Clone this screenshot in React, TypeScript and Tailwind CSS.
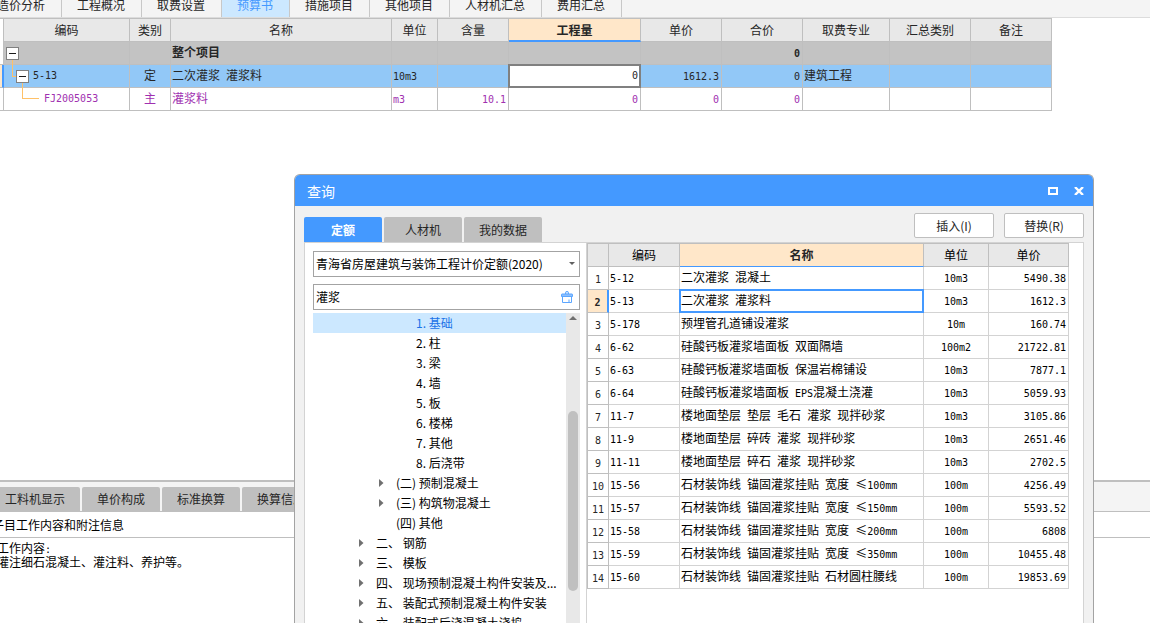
import { Fragment, useState, type ReactNode } from "react";

type Align = "left" | "center" | "right";

const pageTabs = ["造价分析", "工程概况", "取费设置", "预算书", "措施项目", "其他项目", "人材机汇总", "费用汇总"];

const detailTabs = ["工料机显示", "单价构成", "标准换算", "换算信息"];

const dialogTabs = ["定额", "人材机", "我的数据"];

const budgetColumns = [
  { title: "编码", width: "w-[126px]" },
  { title: "类别", width: "w-[41px]" },
  { title: "名称", width: "w-[221px]" },
  { title: "单位", width: "w-[46px]" },
  { title: "含量", width: "w-[71px]" },
  { title: "工程量", width: "w-[132px]" },
  { title: "单价", width: "w-[81px]" },
  { title: "合价", width: "w-[81px]" },
  { title: "取费专业", width: "w-[87px]" },
  { title: "汇总类别", width: "w-[81px]" },
  { title: "备注", width: "w-[81px]" },
];

const treeItems = [
  { level: 3, label: "1. 基础" },
  { level: 3, label: "2. 柱" },
  { level: 3, label: "3. 梁" },
  { level: 3, label: "4. 墙" },
  { level: 3, label: "5. 板" },
  { level: 3, label: "6. 楼梯" },
  { level: 3, label: "7. 其他" },
  { level: 3, label: "8. 后浇带" },
  { level: 2, label: "(二) 预制混凝土", folder: true },
  { level: 2, label: "(三) 构筑物混凝土", folder: true },
  { level: 2, label: "(四) 其他" },
  { level: 1, label: "二、 钢筋", folder: true },
  { level: 1, label: "三、 模板", folder: true },
  { level: 1, label: "四、 现场预制混凝土构件安装及...", folder: true },
  { level: 1, label: "五、 装配式预制混凝土构件安装", folder: true },
  { level: 1, label: "六、 装配式后浇混凝土浇捣", folder: true },
];

const quotas = [
  { code: "5-12", name: "二次灌浆 混凝土", unit: "10m3", price: "5490.38" },
  { code: "5-13", name: "二次灌浆 灌浆料", unit: "10m3", price: "1612.3" },
  { code: "5-178", name: "预埋管孔道铺设灌浆", unit: "10m", price: "160.74" },
  { code: "6-62", name: "硅酸钙板灌浆墙面板 双面隔墙", unit: "100m2", price: "21722.81" },
  { code: "6-63", name: "硅酸钙板灌浆墙面板 保温岩棉铺设", unit: "10m3", price: "7877.1" },
  { code: "6-64", name: "硅酸钙板灌浆墙面板 EPS混凝土浇灌", unit: "10m3", price: "5059.93" },
  { code: "11-7", name: "楼地面垫层 垫层 毛石 灌浆 现拌砂浆", unit: "10m3", price: "3105.86" },
  { code: "11-9", name: "楼地面垫层 碎砖 灌浆 现拌砂浆", unit: "10m3", price: "2651.46" },
  { code: "11-11", name: "楼地面垫层 碎石 灌浆 现拌砂浆", unit: "10m3", price: "2702.5" },
  { code: "15-56", name: "石材装饰线 锚固灌浆挂贴 宽度 ≤100mm", unit: "100m", price: "4256.49" },
  { code: "15-57", name: "石材装饰线 锚固灌浆挂贴 宽度 ≤150mm", unit: "100m", price: "5593.52" },
  { code: "15-58", name: "石材装饰线 锚固灌浆挂贴 宽度 ≤200mm", unit: "100m", price: "6808" },
  { code: "15-59", name: "石材装饰线 锚固灌浆挂贴 宽度 ≤350mm", unit: "100m", price: "10455.48" },
  { code: "15-60", name: "石材装饰线 锚固灌浆挂贴 石材圆柱腰线", unit: "100m", price: "19853.69" },
];

const indent: Record<number, string> = { 1: "pl-[46px]", 2: "pl-[66px]", 3: "pl-[86px]" };

const aligns: Record<Align, string> = {
  left: "text-left pl-px",
  center: "text-center",
  right: "text-right pr-[2px]",
};

// Latin runs take the half-width mono face, two letters per Chinese character
function Mixed({ text }: { text: string }) {
  return (
    <>
      {text.split(/([\x20-\x7e]+)/).map((part, i) =>
        i % 2 === 1 ? (
          <span key={i} className="font-['DejaVu_Sans_Mono',monospace] text-[10px] leading-none whitespace-pre">{part}</span>
        ) : (
          <Fragment key={i}>{part}</Fragment>
        )
      )}
    </>
  );
}

function Cell({ children, align = "left", className = "" }: { children?: ReactNode; align?: Align; className?: string }) {
  return (
    <td className={`h-[23px] border-r border-b border-[#bfbfbf] p-0 align-top leading-5 whitespace-nowrap ${aligns[align]} ${className}`}>
      {typeof children === "string" ? <Mixed text={children} /> : children}
    </td>
  );
}

function Collapse({ name }: { name: string }) {
  return (
    <button aria-label={name} className="block h-[13px] w-[13px] shrink-0">
      <svg viewBox="0 0 13 13" className="block h-[13px] w-[13px] overflow-visible" shapeRendering="crispEdges">
        <rect x="0.5" y="0.5" width="12" height="12" fill="#fff" stroke="#808080" />
        <path d="M3 6.5h7" stroke="#1a1a1a" />
      </svg>
    </button>
  );
}

function BudgetTable() {
  const [quantity, setQuantity] = useState("0");

  return (
    <table className="w-[1052px] table-fixed border-separate border-spacing-0 border-t border-[#bfbfbf] text-xs text-[#262626]">
      <colgroup>
        <col className="w-1" />
        {budgetColumns.map((c) => (
          <col key={c.title} className={c.width} />
        ))}
      </colgroup>
      <thead>
        <tr>
          <td className="border-r border-[#bfbfbf] p-0" />
          {budgetColumns.map((c) =>
            c.title === "工程量" ? (
              <th key={c.title} className="h-[23px] border-r border-b-2 border-r-[#bfbfbf] border-b-[#4499ff] bg-[#ffe7c9] p-0 leading-5 font-bold">{c.title}</th>
            ) : (
              <th key={c.title} className="h-[23px] border-r border-b border-[#bfbfbf] bg-[#e8e8e8] p-0 leading-5 font-normal">{c.title}</th>
            )
          )}
        </tr>
      </thead>
      <tbody>
        <tr className="bg-[#c3c3c3] font-bold">
          <td className="border-r border-b border-[#bfbfbf] bg-white p-0" />
          <Cell>
            <div className="flex h-[22px] items-center pl-px">
              <Collapse name="整个项目" />
            </div>
          </Cell>
          <Cell />
          <Cell>整个项目</Cell>
          <Cell />
          <Cell />
          <Cell />
          <Cell />
          <Cell align="right">0</Cell>
          <Cell />
          <Cell />
          <Cell />
        </tr>
        <tr className="bg-[#92c8f7]">
          <td className="border-r-2 border-b border-r-[#4499ff] border-b-[#bfbfbf] bg-[#ffe7c9] p-0" />
          <Cell>
            <div className="flex h-[22px] items-center gap-1 pl-px">
              <div className="flex items-center">
                <svg width="10" height="22" className="overflow-visible" shapeRendering="crispEdges">
                  <path d="M6.5 -5V11.5H10" fill="none" stroke="#ffc168" />
                </svg>
                <Collapse name="5-13" />
              </div>
              <Mixed text="5-13" />
            </div>
          </Cell>
          <Cell align="center">定</Cell>
          <Cell>二次灌浆 灌浆料</Cell>
          <Cell>10m3</Cell>
          <Cell />
          <Cell className="relative">
            <input
              aria-label="工程量"
              value={quantity}
              onChange={(e) => setQuantity(e.target.value)}
              className="absolute -top-px -left-px h-[24px] w-[calc(100%+2px)] border-2 border-[#808080] bg-white pr-px pb-0.5 text-right font-['DejaVu_Sans_Mono',monospace] text-[10px] outline-none"
            />
          </Cell>
          <Cell align="right">1612.3</Cell>
          <Cell align="right">0</Cell>
          <Cell>建筑工程</Cell>
          <Cell />
          <Cell />
        </tr>
        <tr className="bg-white text-[#a030b0]">
          <td className="border-r border-b border-[#bfbfbf] p-0" />
          <Cell>
            <div className="flex h-[22px] items-center gap-1 pl-px">
              <svg width="34" height="22" className="overflow-visible" shapeRendering="crispEdges">
                <path d="M16.5 -5V10.5H33" fill="none" stroke="#ffc168" />
              </svg>
              <Mixed text="FJ2005053" />
            </div>
          </Cell>
          <Cell align="center">主</Cell>
          <Cell>灌浆料</Cell>
          <Cell>m3</Cell>
          <Cell align="right">10.1</Cell>
          <Cell align="right">0</Cell>
          <Cell align="right">0</Cell>
          <Cell align="right">0</Cell>
          <Cell />
          <Cell />
          <Cell />
        </tr>
      </tbody>
    </table>
  );
}

function QuotaTree() {
  const [selected, setSelected] = useState("1. 基础");

  return (
    <div className="mt-[3px] flex min-h-0 flex-1">
      <ul className="min-w-0 flex-1 overflow-hidden">
        {treeItems.map((item) => (
          <li key={item.label}>
            <button
              onClick={() => setSelected(item.label)}
              className={`flex h-5 w-full items-center text-left ${indent[item.level]} ${selected === item.label ? "bg-[#cce8ff] text-[#1a73e8]" : "text-black"}`}
            >
              <span className="w-[17px] shrink-0">
                {item.folder && (
                  <svg width="5" height="8" viewBox="0 0 5 8">
                    <path d="M0 0L4.5 4L0 8z" fill="#707070" />
                  </svg>
                )}
              </span>
              <span className="whitespace-nowrap">{item.label}</span>
            </button>
          </li>
        ))}
      </ul>
      <div className="flex w-[14px] flex-col items-center bg-[#e8e8e8]">
        <svg width="8" height="4" viewBox="0 0 8 4" className="mt-[3px]">
          <path d="M0 4L4 0L8 4z" fill="#707070" />
        </svg>
        <div className="mt-[91px] h-[180px] w-[10px] rounded-full bg-[#c0c0c0]" />
      </div>
    </div>
  );
}

function QuotaTable() {
  const [selected, setSelected] = useState(1);

  return (
    <table className="w-[482px] table-fixed border-separate self-start border-spacing-0 border-t border-l border-[#bfbfbf] text-xs text-black">
      <colgroup>
        <col className="w-[21px]" />
        <col className="w-[71px]" />
        <col className="w-[244px]" />
        <col className="w-[65px]" />
        <col className="w-[80px]" />
      </colgroup>
      <thead>
        <tr className="bg-[#e8e8e8]">
          <td className="border-r border-b border-[#bfbfbf] p-0" />
          <th className="h-[23px] border-r border-b border-[#bfbfbf] p-0 leading-5 font-normal">编码</th>
          <th className="h-[23px] border-r border-b border-r-[#bfbfbf] border-b-[#4499ff] bg-[#ffe7c9] p-0 leading-5 font-bold text-[#262626]">名称</th>
          <th className="h-[23px] border-r border-b border-[#bfbfbf] p-0 leading-5 font-normal">单位</th>
          <th className="h-[23px] border-r border-b border-[#bfbfbf] p-0 leading-5 font-normal">单价</th>
        </tr>
      </thead>
      <tbody>
        {quotas.map((q, i) => (
          <tr key={q.code} onClick={() => setSelected(i)}>
            <th
              className={`h-[23px] border-b border-b-[#bfbfbf] p-0 text-center leading-5 text-[#262626] ${
                i === selected ? "border-r-2 border-r-[#4499ff] bg-[#ffe7c9] font-bold" : "border-r border-r-[#bfbfbf] font-normal"
              }`}
            >
              <Mixed text={String(i + 1)} />
            </th>
            <Cell className="border-[#d3d3d3]!">{q.code}</Cell>
            <Cell className="relative border-[#d3d3d3]!">
              <Mixed text={q.name} />
              {i === selected && <span className="pointer-events-none absolute -inset-px border-2 border-[#4499ff]" />}
            </Cell>
            <Cell align="center" className="border-[#d3d3d3]!">{q.unit}</Cell>
            <Cell align="right" className="border-[#d3d3d3]!">{q.price}</Cell>
          </tr>
        ))}
      </tbody>
    </table>
  );
}

function QueryDialog() {
  const [tab, setTab] = useState("定额");
  const [keyword, setKeyword] = useState("灌浆");

  return (
    <section
      role="dialog"
      aria-label="查询"
      className="absolute top-[174px] right-14 bottom-0 left-[294px] flex flex-col overflow-hidden rounded-t-md border border-b-0 border-[#a3a3a3] bg-[#f1f1f1]"
    >
      <header className="flex h-[31px] shrink-0 items-center justify-between bg-[#4499ff] pr-[9px] pl-3 text-white">
        <h2 className="text-sm leading-5">查询</h2>
        <div className="flex items-center gap-4">
          <button aria-label="最大化" className="block h-2 w-[10px] border-2 border-white" />
          <button aria-label="关闭" className="block">
            <svg width="10" height="8" viewBox="0 0 10 8" className="block">
              <path d="M1 0L9 8M9 0L1 8" stroke="#fff" strokeWidth="2.4" />
            </svg>
          </button>
        </div>
      </header>

      <div className="flex h-9 shrink-0 items-end justify-between px-[9px]">
        <div className="flex gap-0.5">
          {dialogTabs.map((t) => (
            <button
              key={t}
              onClick={() => setTab(t)}
              className={`h-[25px] w-[78px] rounded-t-xs ${t === tab ? "bg-[#4499ff] font-bold text-white" : "bg-[#bfbfbf] text-[#262626]"}`}
            >
              {t}
            </button>
          ))}
        </div>
        <div className="flex gap-[10px] pb-1">
          <button className="h-[25px] w-20 rounded-xs border border-[#bfbfbf] bg-white text-[#262626]">插入(I)</button>
          <button className="h-[25px] w-20 rounded-xs border border-[#bfbfbf] bg-white text-[#262626]">替换(R)</button>
        </div>
      </div>

      <div className="mx-[9px] flex min-h-0 flex-1 border border-b-0 border-[#d3d3d3] bg-white">
        <div className="flex w-[282px] shrink-0 flex-col border-r border-[#d3d3d3] pt-2 pr-[6px] pl-2">
          <div className="relative">
            <select aria-label="定额库" className="block h-[26px] w-full appearance-none border border-[#a3a3a3] bg-white pl-[2px] text-xs text-black outline-none">
              <option>青海省房屋建筑与装饰工程计价定额(2020)</option>
            </select>
            <svg width="6" height="3" viewBox="0 0 6 3" className="pointer-events-none absolute top-[11px] right-[5px]">
              <path d="M0 0H6L3 3z" fill="#606060" />
            </svg>
          </div>
          <div className="mt-[7px] flex h-[26px] shrink-0 items-center border border-[#a3a3a3] bg-white pr-[6px] pl-[2px]">
            <input
              aria-label="关键字"
              value={keyword}
              onChange={(e) => setKeyword(e.target.value)}
              className="min-w-0 flex-1 bg-transparent text-xs text-black outline-none"
            />
            <button aria-label="清除" onClick={() => setKeyword("")}>
              <svg width="12" height="12" viewBox="0 0 12 12" className="block" fill="none" stroke="#5ca6ff">
                <path d="M4.5 3V1.5Q4.5 0.5 6 0.5T7.5 1.5V3" fill="#cce4ff" />
                <path d="M0.5 5.5V3.5Q0.5 3 1 3H11Q11.5 3 11.5 3.5V5.5z" fill="#8cc0ff" />
                <path d="M1.5 5.5V11.5H10.5V5.5M8 8.5V11.5" />
              </svg>
            </button>
          </div>
          <QuotaTree />
        </div>
        <QuotaTable />
      </div>
    </section>
  );
}

export default function App() {
  const [page, setPage] = useState("预算书");

  return (
    <div className="relative flex h-screen flex-col overflow-hidden bg-white font-['Noto_Sans_CJK_SC',sans-serif] text-xs text-black">
      <nav className="flex h-[18px] shrink-0 items-start overflow-hidden border-b border-[#dcdcdc] bg-[#f4f4f4]">
        <div className="-ml-[18px] flex">
          {pageTabs.map((t) => (
            <button
              key={t}
              onClick={() => setPage(t)}
              className={`h-[17px] border-r border-[#c8c8c8] pr-4 pb-[7px] pl-[15px] leading-[10px] whitespace-nowrap ${t === page ? "bg-[#cce8ff] text-[#4499ff]" : "text-[#262626]"}`}
            >
              {t}
            </button>
          ))}
        </div>
      </nav>

      <main className="min-h-0 flex-1">
        <BudgetTable />
      </main>

      <section className="h-[143px] shrink-0 border-t-2 border-[#bfbfbf]">
        <div className="flex h-[30px] items-end overflow-hidden border-b border-[#bfbfbf] bg-[#f4f4f4]">
          <div className="-ml-[10px] flex gap-0.5">
            {detailTabs.map((t) => (
              <button key={t} className="h-[24px] rounded-t-xs bg-[#bfbfbf] px-[15px] whitespace-nowrap text-[#262626]">{t}</button>
            ))}
          </div>
        </div>
        <h3 className="h-[26px] border-b border-[#bfbfbf] leading-[26px]">
          <span className="-ml-2">子目工作内容和附注信息</span>
        </h3>
        <div className="-ml-[3px] pt-[3px] leading-[14px]">
          <p>工作内容<Mixed text=":" /></p>
          <p>灌注细石混凝土、灌注料、养护等。</p>
        </div>
      </section>

      <QueryDialog />
    </div>
  );
}
